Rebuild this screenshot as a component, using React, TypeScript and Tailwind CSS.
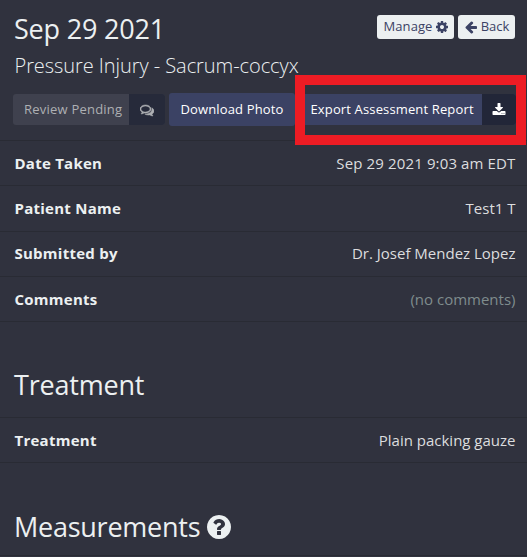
import type { ReactNode } from "react";

const icons = {
  cog: "M1152 896q0-106-75-181t-181-75-181 75-75 181 75 181 181 75 181-75 75-181zm512-109v222q0 12-8 23t-20 13l-185 28q-19 54-39 91 35 50 107 138 10 12 10 25t-9 23q-27 37-99 108t-94 71q-12 0-26-9l-138-108q-44 23-91 38-16 136-29 186-7 28-36 28h-222q-14 0-24.500-8.500t-11.500-21.500l-28-184q-49-16-90-37l-141 107q-10 9-25 9-14 0-25-11-126-114-165-168-7-10-7-23 0-12 8-23 15-21 51-66.500t54-70.500q-27-50-41-99l-183-27q-13-2-21-12.500t-8-23.500v-222q0-12 8-23t19-13l186-28q14-46 39-92-40-57-107-138-10-12-10-24 0-10 9-23 26-36 98.500-107.500t94.500-71.500q13 0 26 10l138 107q44-23 91-38 16-136 29-186 7-28 36-28h222q14 0 24.500 8.500t11.500 21.500l28 184q49 16 90 37l142-107q9-9 24-9 13 0 25 10 129 119 165 170 7 8 7 22 0 12-8 23-15 21-51 66.500t-54 70.500q26 50 41 98l183 28q13 2 21 12.500t8 23.500z",
  arrowLeft: "M1664 896v128q0 53-32.500 90.500t-84.500 37.500h-704l293 294q38 36 38 90t-38 90l-75 76q-37 37-90 37-52 0-91-37l-651-652q-37-37-37-90 0-52 37-91l651-650q38-38 91-38 52 0 90 38l75 74q38 38 38 91t-38 91l-293 293h704q52 0 84.500 37.500t32.500 90.500z",
  download: "M1344 1344q0-26-19-45t-45-19-45 19-19 45 19 45 45 19 45-19 19-45zm256 0q0-26-19-45t-45-19-45 19-19 45 19 45 45 19 45-19 19-45zm128-224v320q0 40-28 68t-68 28h-1472q-40 0-68-28t-28-68v-320q0-40 28-68t68-28h465l135 136q58 56 136 56t136-56l136-136h464q40 0 68 28t28 68zm-325-569q17 41-14 70l-448 448q-18 19-45 19t-45-19l-448-448q-31-29-14-70 17-39 59-39h256v-448q0-26 19-45t45-19h256q26 0 45 19t19 45v448h256q42 0 59 39z",
  question: "M1024 1376v-192q0-14-9-23t-23-9h-192q-14 0-23 9t-9 23v192q0 14 9 23t23 9h192q14 0 23-9t9-23zm256-672q0-88-55.500-163t-138.500-116-170-41q-243 0-371 213-15 24 8 42l132 100q7 6 19 6 16 0 25-12 53-68 86-92 34-24 86-24 48 0 85.500 26t37.500 59q0 38-20 61t-68 45q-63 28-115.500 86.500t-52.500 125.500v36q0 14 9 23t23 9h192q14 0 23-9t9-23q0-19 21.500-49.500t54.500-49.500q32-18 49-28.500t46-35 44.500-48 28-60.500 12.500-81zm384 192q0 209-103 385.500t-279.500 279.500-385.500 103-385.500-103-279.500-279.500-103-385.500 103-385.500 279.500-279.500 385.500-103 385.500 103 279.500 279.500 103 385.500z",
  comments: "M704 384q-153 0-286 52t-211.500 141-78.500 191q0 82 53 158t149 132l97 56-35 84q34-20 62-39l44-31 53 10q78 14 153 14 153 0 286-52t211.500-141 78.500-191-78.500-191-211.500-141-286-52zm0-128q191 0 353.500 68.500t256.500 186.500 94 257-94 257-256.500 186.500-353.500 68.500q-86 0-176-16-124 88-278 128-36 9-86 16h-3q-11 0-20.500-8t-11.500-21q-1-3-1-6.500t.500-6.500 2-6l2.500-5 3.500-5.500 4-5 4.500-5 4-4.500q5-6 23-25t26-29.500 22.500-29 25-38.500 20.500-44q-124-72-195-177t-71-224q0-139 94-257t256.500-186.500 353.500-68.500zm822 1169q10 24 20.500 44t25 38.500 22.500 29 26 29.500 23 25q1 1 4 4.500t4.500 5 4 5 3.500 5.500l2.500 5 2 6 .500 6.500-1 6.500q-3 14-13 22t-22 7q-50-7-86-16-154-40-278-128-90 16-176 16-271 0-472-132 58 4 88 4 161 0 309-45t264-129q125-92 192-212t67-254q0-77-23-152 129 71 204 178t75 230q0 120-71 224.500t-195 176.500z",
};

const Icon = ({ name, className }: { name: keyof typeof icons; className: string }) => (
  <svg viewBox="0 0 1792 1792" fill="currentColor" className={className} aria-hidden="true">
    <path d={icons[name]} />
  </svg>
);

const Row = ({ label, children }: { label: string; children: ReactNode }) => (
  <div className="flex h-[45.3px] items-center justify-between border-t border-[#292b34] pr-[11.5px] pl-[14.5px] text-[15px]">
    <dt className="font-bold tracking-[0.25px]">{label}</dt>
    <dd className="text-[#dcdddf]">{children}</dd>
  </div>
);

const App = () => {
  return (
    <main className="relative h-[557px] w-[527px] overflow-hidden bg-[#30323e] font-['Open_Sans',sans-serif] text-[#ecf0f1]">
      <header className="flex h-[139px] flex-col">
        <div className="flex h-[51px] items-start justify-between pr-[12px] pl-[14px]">
          <h1 className="pt-[10px] text-[27px] leading-[37px] tracking-[-0.2px]">Sep 29 2021</h1>
          <div className="flex gap-1 pt-[15px] text-[13px] text-[#3b4264]">
            <button className="flex h-6 w-[77px] items-center justify-center gap-[2px] rounded-[3px] bg-[#ecf0f1] pl-px tracking-[0.1px]">
              Manage <Icon name="cog" className="size-[14px]" />
            </button>
            <button className="flex h-6 w-[57px] items-center justify-center gap-[3px] rounded-[3px] bg-[#ecf0f1]">
              <Icon name="arrowLeft" className="size-[14px]" /> Back
            </button>
          </div>
        </div>
        <h2 className="pl-[14.5px] text-[20px] leading-[30px] font-light tracking-[-0.06px]">Pressure Injury - Sacrum-coccyx</h2>
        <div className="mt-[12px] flex h-[33px] items-center pl-[13px] text-[13px] font-medium text-white">
          <button className="flex h-[31px] w-[152px] overflow-hidden rounded-[3px] bg-[#3f414e] text-[#aeb0b3]">
            <span className="flex w-[116px] items-center pl-[11px] tracking-[0.22px] whitespace-nowrap">Review Pending</span>
            <span className="flex flex-1 items-center justify-center bg-[#262a3a]">
              <Icon name="comments" className="size-[14px] stroke-current stroke-[70]" />
            </span>
          </button>
          <button className="ml-1 h-[33px] w-[126px] rounded-[3px] bg-[#3b4264] tracking-[0.15px]">Download Photo</button>
          <button className="ml-1 flex h-[31px] w-[217px] overflow-hidden rounded-[3px] bg-[#3b4264]">
            <span className="flex w-[183px] items-center pl-[11.5px] tracking-[0.14px] whitespace-nowrap">Export Assessment Report</span>
            <span className="flex flex-1 items-center justify-center bg-[#222638]">
              <Icon name="download" className="size-[14px]" />
            </span>
          </button>
        </div>
      </header>

      <dl className="mt-px border-b border-[#292b34]">
        <Row label="Date Taken">
          <span className="tracking-[0.13px]">Sep 29 2021 9:03 am EDT</span>
        </Row>
        <Row label="Patient Name">Test1 T</Row>
        <Row label="Submitted by">Dr. Josef Mendez Lopez</Row>
        <Row label="Comments">
          <span className="text-[#7f8c8d]">(no comments)</span>
        </Row>
      </dl>

      <h2 className="mt-[44px] pl-[14px] text-[27px] leading-[37px] tracking-[-0.2px]">Treatment</h2>
      <dl className="mt-[14px] border-b border-[#292b34]">
        <Row label="Treatment">Plain packing gauze</Row>
      </dl>

      <h2 className="mt-[45px] flex items-center gap-[5px] pl-[14px] text-[27px] leading-[37px] tracking-[-0.25px]">
        Measurements <Icon name="question" className="size-[28px]" />
      </h2>
      <div className="mt-[10px] border-t border-[#292b34]" />

      {/* highlight around the export button */}
      <div className="absolute top-[75px] left-[295px] h-[70px] w-[231px] border-[10px] border-[#ed1c24]" />
    </main>
  );
};

export default App;
